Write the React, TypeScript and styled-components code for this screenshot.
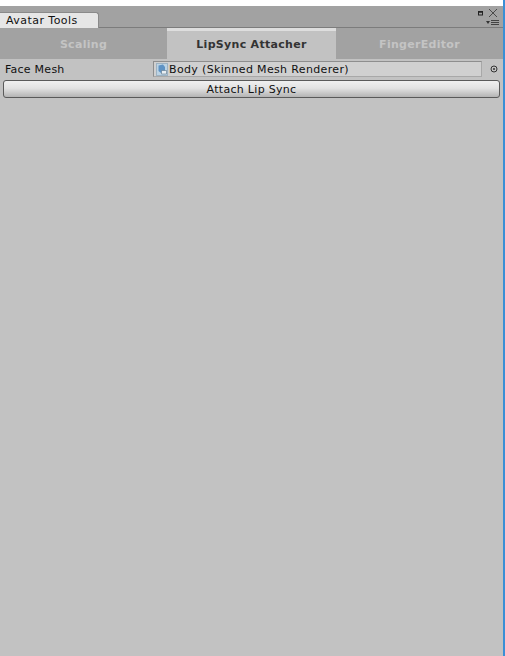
import React from "react";
import styled, { createGlobalStyle } from "styled-components";

const Global = createGlobalStyle`
  html, body { margin: 0; padding: 0; background: #fff; }
  #root { width: 505px; height: 656px; overflow: hidden; }
`;

const Page = styled.div`
  width: 505px;
  height: 656px;
  box-sizing: border-box;
  padding-top: 6px;
  display: flex;
  flex-direction: column;
  background: #fff;
  border-right: 2px solid #3a8fd6;
  font-family: "DejaVu Sans", sans-serif;
  font-size: 11px;
  color: #111;
`;

const Window = styled.div`
  flex: 1;
  display: flex;
  flex-direction: column;
  min-height: 0;
  background: #c2c2c2;
`;

const TitleBar = styled.div`
  height: 22px;
  box-sizing: border-box;
  flex: none;
  display: flex;
  align-items: flex-end;
  justify-content: space-between;
  background: #a2a2a2;
  border-bottom: 1px solid #7c7c7c;
`;

const WindowTab = styled.div`
  width: 99px;
  height: 16px;
  box-sizing: border-box;
  padding-left: 6px;
  margin-bottom: -1px;
  display: flex;
  align-items: center;
  background: #e6e6e6;
  border: 1px solid #8a8a8a;
  border-left: none;
  border-bottom: none;
  border-top-right-radius: 3px;
  letter-spacing: 0.45px;
`;

const WindowIcons = styled.svg`
  width: 26px;
  height: 21px;
  display: block;
`;

const TabRow = styled.div`
  height: 31px;
  flex: none;
  display: grid;
  grid-template-columns: 167px 169px 1fr;
  background: #a2a2a2;
`;

const Tab = styled.div<{ $active?: boolean }>`
  display: flex;
  align-items: center;
  justify-content: center;
  box-sizing: border-box;
  padding-bottom: 1px;
  font-weight: 700;
  letter-spacing: 0.3px;
  color: ${(p) => (p.$active ? "#333" : "#c4c4c4")};
  background: ${(p) => (p.$active ? "#c2c2c2" : "#a2a2a2")};
  border-top: 3px solid ${(p) => (p.$active ? "#dedede" : "#a2a2a2")};
`;

const Content = styled.div`
  flex: 1;
  display: flex;
  flex-direction: column;
  padding: 1px 3px 0 3px;
  gap: 2px;
`;

const FieldRow = styled.div`
  height: 18px;
  display: flex;
  align-items: center;
`;

const FieldLabel = styled.div`
  width: 148px;
  flex: none;
  padding-left: 2px;
  letter-spacing: 0.25px;
`;

const ObjectField = styled.div`
  width: 329px;
  height: 16px;
  box-sizing: border-box;
  flex: none;
  display: flex;
  align-items: center;
  gap: 1px;
  padding-left: 2px;
  background: #d0d0d0;
  border: 1px solid #8e8e8e;
  border-right-color: #a8a8a8;
  border-bottom-color: #a8a8a8;
  letter-spacing: 0.35px;
`;

const MeshIcon = styled.svg`
  width: 12px;
  height: 13px;
  flex: none;
  display: block;
`;

const PickerIcon = styled.svg`
  width: 8px;
  height: 8px;
  margin-left: 8px;
  flex: none;
  display: block;
`;

const ActionButton = styled.button`
  width: 497px;
  height: 18px;
  padding: 0;
  font: inherit;
  color: inherit;
  letter-spacing: 0.3px;
  background: linear-gradient(#f0f0f0, #e2e2e2 45%, #b4b4b4);
  border: 1px solid #5a5a5a;
  border-radius: 3px;
`;

export default function App() {
  return (
    <Page>
      <Global />
      <Window>
        <TitleBar>
          <WindowTab>Avatar Tools</WindowTab>
          <WindowIcons viewBox="0 0 26 21">
            <rect x="1.5" y="6" width="4" height="3" fill="none" stroke="#222" strokeWidth="1" />
            <rect x="1" y="5" width="5" height="1.5" fill="#222" />
            <path d="M12 3 L20 11 M20 3 L12 11" stroke="#333" strokeWidth="0.8" fill="none" />
            <path d="M9 15 H13 L11 18 Z" fill="#333" />
            <path d="M14 14.5 H22 M14 16.5 H22 M14 18.5 H22" stroke="#444" strokeWidth="1" fill="none" />
          </WindowIcons>
        </TitleBar>
        <TabRow>
          <Tab>Scaling</Tab>
          <Tab $active>LipSync Attacher</Tab>
          <Tab>FingerEditor</Tab>
        </TabRow>
        <Content>
          <FieldRow>
            <FieldLabel>Face Mesh</FieldLabel>
            <ObjectField>
              <MeshIcon viewBox="0 0 12 13">
                <rect x="0.5" y="0.5" width="11" height="12" fill="#bcd3e4" stroke="#9db2c2" />
                <path d="M2.5 2.5 L7 1.5 L9 4 V8 L5 10 L2.5 8 Z" fill="#5f93c4" />
                <path d="M5.5 7.5 H10.5 V11 H5.5 Z" fill="#e8eef2" stroke="#5d7488" strokeWidth="0.6" />
              </MeshIcon>
              Body (Skinned Mesh Renderer)
            </ObjectField>
            <PickerIcon viewBox="0 0 8 8">
              <circle cx="4" cy="4" r="3" fill="none" stroke="#333" strokeWidth="1" />
              <circle cx="4" cy="4" r="1" fill="#333" />
            </PickerIcon>
          </FieldRow>
          <ActionButton>Attach Lip Sync</ActionButton>
        </Content>
      </Window>
    </Page>
  );
}
